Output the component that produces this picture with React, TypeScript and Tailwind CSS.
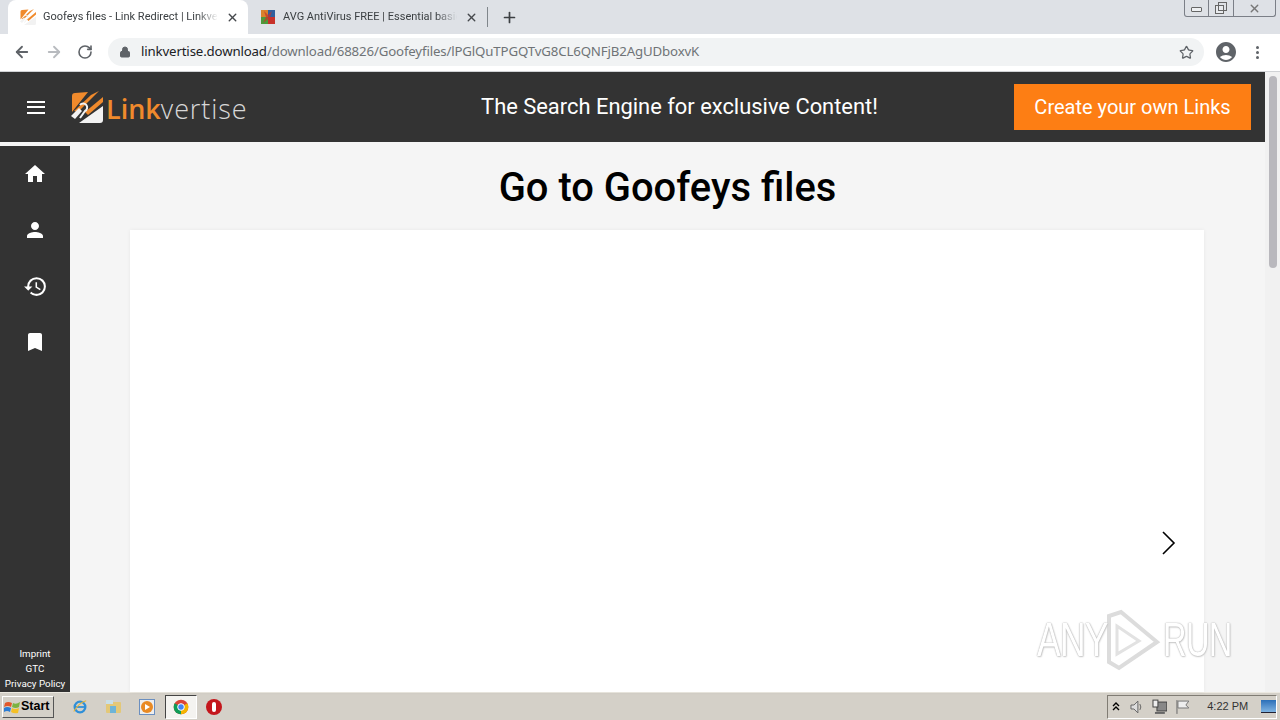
import React from "react";
import { ArrowLeft, ArrowRight, RotateCw, Lock, Star, X, Plus } from "lucide-react";
import { MdHome, MdPerson, MdHistory, MdBookmark, MdAccountCircle } from "react-icons/md";

const LvLogo = ({ size = 32 }: { size?: number }) => (
  <svg width={size} height={size} viewBox="0 0 32 32">
    <path d="M1 5 a3 3 0 0 1 3 -3 L17 1 L1 21 Z" fill="#f08a2c" />
    <path d="M20 4 L28 0 L7 21 L3 20 Z" fill="#f08a2c" />
    <path d="M0 25 L8 17 L11 20 L4 28 Z" fill="#f2f2f2" />
    <path d="M32 6 V11 L17 24 L14 21 Z" fill="#f08a2c" />
    <path d="M32 15 V29 a3 3 0 0 1 -3 3 H8 Z" fill="#f2f2f2" />
    <path d="M9 14 a4 4 0 1 1 5 6 l-5 7" stroke="#f2f2f2" strokeWidth="2" fill="none" />
  </svg>
);

const AvgIcon = () => (
  <svg width="14" height="14" viewBox="0 0 14 14">
    <rect x="0" y="0" width="7" height="7" fill="#d9822b" />
    <rect x="7" y="0" width="7" height="7" fill="#2f5f9e" />
    <rect x="0" y="7" width="7" height="7" fill="#4d9a3a" />
    <rect x="7" y="7" width="7" height="7" fill="#c8322a" />
    <path d="M3 1 L7 5 L11 1 L9 7 L12 13 L7 9 L2 13 L5 7 Z" fill="#c8322a" opacity="0.7" />
  </svg>
);

const Tab = ({ active, icon, title, width }: { active?: boolean; icon: React.ReactNode; title: string; width: string }) => (
  <div className={`${width} h-[34px] flex items-center pl-[12px] pr-[9px] rounded-t-[8px] ${active ? "bg-white" : ""}`}>
    <span className="w-[16px] h-[16px] flex items-center justify-center shrink-0">{icon}</span>
    <span className="ml-[7px] mt-[1px] flex-1 min-w-0 overflow-hidden whitespace-nowrap text-[11px] text-[#3c4043] [mask-image:linear-gradient(to_right,black_88%,transparent)]">
      {title}
    </span>
    <X size={13} strokeWidth={2.6} className="ml-[8px] shrink-0 text-[#45484c]" />
  </div>
);

const Side = ({ children }: { children: React.ReactNode }) => (
  <div className="h-[56px] flex items-center justify-center text-white">{children}</div>
);

const Watermark = () => (
  <div className="absolute left-[1037px] top-[608px] flex items-center pointer-events-none select-none text-white [text-shadow:0_0_2px_#b4b4b4,0_0_1px_#b4b4b4,1px_1px_2px_#d0d0d0]">
    <span className="text-[48px] leading-[60px] font-['Liberation_Sans',sans-serif] [transform:scaleX(0.74)] origin-left w-[68px] tracking-[-1px]">ANY</span>
    <svg width="58" height="64" viewBox="0 0 58 64" className="ml-[-2px]">
      <path d="M6 8 L6 54 L16 60 L54 34 L18 4 Z" fill="none" stroke="#dcdcdc" strokeWidth="4" />
      <path d="M14 18 L14 46 L36 33 Z" fill="none" stroke="#e2e2e2" strokeWidth="3" />
    </svg>
    <span className="text-[48px] leading-[60px] font-['Liberation_Sans',sans-serif] [transform:scaleX(0.68)] origin-left w-[72px] tracking-[-1px] ml-[2px]">RUN</span>
  </div>
);

export default function App() {
  return (
    <div className="relative w-[1280px] h-[720px] overflow-hidden flex flex-col bg-white font-['Roboto',sans-serif]">
      {/* tab strip */}
      <div className="relative h-[34px] shrink-0 bg-[#dee1e6] flex pl-[8px] font-['Roboto',sans-serif]">
        <Tab active width="w-[240px]" icon={<LvLogo size={16} />} title="Goofeys files - Link Redirect | Linkvertise" />
        <Tab width="w-[239px]" icon={<AvgIcon />} title="AVG AntiVirus FREE | Essential basic protection" />
        <div className="w-px h-[20px] mt-[7px] bg-[#80868b]" />
        <div className="w-[42px] flex items-center justify-center">
          <Plus size={17} strokeWidth={2.4} className="text-[#3c4043]" />
        </div>
        <div className="absolute right-[4px] top-0 w-[92px] h-[17px] flex border border-t-0 border-[#7b7f87] rounded-b-[3px] text-[#555]">
          <div className="w-[24px] flex items-center justify-center border-r border-[#7b7f87]">
            <div className="w-[11px] h-[5px] mt-[3px] border border-[#666] rounded-[1px] bg-[#eef0f2]" />
          </div>
          <div className="w-[25px] flex items-center justify-center border-r border-[#7b7f87]">
            <div className="relative w-[9px] h-[9px] mt-[3px] mr-[3px] border border-[#666] bg-[#e8eaed]">
              <div className="absolute left-[2px] top-[-4px] w-[9px] h-[9px] border border-[#666] -z-0" />
            </div>
          </div>
          <div className="flex-1 flex items-center justify-center">
            <X size={13} strokeWidth={2.5} className="text-[#777]" />
          </div>
        </div>
      </div>

      {/* toolbar */}
      <div className="h-[38px] shrink-0 bg-white border-b border-[#d0d2d5] flex items-center pb-[1px]">
        <div className="w-[108px] flex items-center pl-[13px] gap-[14px] text-[#5f6368]">
          <ArrowLeft size={18} strokeWidth={2.4} />
          <ArrowRight size={18} strokeWidth={2.4} className="text-[#b8bbbf]" />
          <RotateCw size={16} strokeWidth={2.4} />
        </div>
        <div className="w-[1096px] h-[28px] rounded-full bg-[#f1f3f4] flex items-center pl-[11px] pr-[10px]">
          <Lock size={12} fill="#5f6368" className="text-[#5f6368]" />
          <span className="ml-[10px] flex-1 text-[13.25px] tracking-[-0.15px] whitespace-nowrap font-['Noto_Sans',sans-serif] text-[#6f7377]">
            <span className="text-[#202124]">linkvertise.download</span>/download/68826/Goofeyfiles/lPGlQuTPGQTvG8CL6QNFjB2AgUDboxvK
          </span>
          <Star size={15} strokeWidth={2} className="text-[#5f6368]" />
        </div>
        <div className="flex-1 flex items-center pl-[10px]">
          <MdAccountCircle size={24} className="text-[#5f6368]" />
          <div className="ml-[18px] flex flex-col gap-[2px]">
            <span className="w-[3px] h-[3px] rounded-full bg-[#5f6368]" />
            <span className="w-[3px] h-[3px] rounded-full bg-[#5f6368]" />
            <span className="w-[3px] h-[3px] rounded-full bg-[#5f6368]" />
          </div>
        </div>
      </div>

      {/* viewport */}
      <div className="flex-1 min-h-0 flex">
        <div className="w-[1265px] flex flex-col min-h-0">
          <header className="h-[70px] shrink-0 bg-[#333333] flex items-center text-white">
            <div className="w-[71px] pl-[27px] flex flex-col gap-[3.5px]">
              <span className="w-[18px] h-[2px] bg-white" />
              <span className="w-[18px] h-[2px] bg-white" />
              <span className="w-[18px] h-[2px] bg-white" />
            </div>
            <LvLogo />
            <span className="ml-[3px] text-[27px] font-['Open_Sans',sans-serif] leading-none w-[144px] whitespace-nowrap mt-[3px]">
              <span className="font-semibold text-[#f08a2c]">Link</span>
              <span className="font-light text-[#d8d8d8] tracking-[0.9px]">vertise</span>
            </span>
            <div className="w-[767px] pl-[96px] ml-[-2px] mt-[1px] text-center text-[21.9px]">The Search Engine for exclusive Content!</div>
            <div className="w-[237px] h-[46px] ml-[-1px] bg-[#fd7e14] flex items-center justify-center text-[20px]">Create your own Links</div>
          </header>
          <div className="h-[4px] shrink-0 bg-[#f5f5f5]" />
          <div className="flex-1 min-h-0 flex bg-[#f5f5f5]">
            <aside className="w-[70px] shrink-0 bg-[#333333] flex flex-col text-white">
              <div className="flex flex-col">
                <Side><MdHome size={24} /></Side>
                <Side><MdPerson size={24} /></Side>
                <Side><MdHistory size={25} /></Side>
                <Side><MdBookmark size={24} /></Side>
              </div>
              <div className="mt-auto pb-[1px] flex flex-col items-center text-[9.8px] leading-[15px]">
                <span>Imprint</span>
                <span>GTC</span>
                <span className="whitespace-nowrap">Privacy Policy</span>
              </div>
            </aside>
            <main className="flex-1 min-w-0 flex flex-col items-center">
              <h1 className="h-[84px] shrink-0 flex items-center text-[39.9px] font-medium text-black">Go to Goofeys files</h1>
              <div className="relative w-[1074px] ml-[-1px] flex-1 bg-white shadow-[0_0_4px_rgba(0,0,0,0.06)]">
                <svg width="16" height="26" viewBox="0 0 16 26" className="absolute left-[1031px] top-[300px]">
                  <path d="M2 2 L13 13 L2 24" fill="none" stroke="#000" strokeWidth="1.6" />
                </svg>
              </div>
            </main>
          </div>
        </div>
        <div className="w-[15px] shrink-0 bg-[#f1f1f1] flex justify-center pt-[4px]">
          <div className="w-[8px] h-[192px] rounded-full bg-[#b9b8bd]" />
        </div>
      </div>

      {/* taskbar */}
      <div className="h-[28px] shrink-0 bg-[#d4d0c8] border-t border-[#ece9e1] flex items-center font-['Liberation_Sans',sans-serif]">
        <div className="ml-[2px] w-[52px] h-[22px] bg-[#d4d0c8] border border-t-white border-l-white border-r-[#555] border-b-[#555] flex items-center pl-[1px]">
          <svg width="17" height="16" viewBox="0 0 17 16">
            <path d="M1 4 Q4 2 8 4 L7 8 Q4 6 0 8 Z" fill="#e2582a" />
            <path d="M9 4 Q12 6 16 3 L15 8 Q12 10 8 8 Z" fill="#7cb342" />
            <path d="M0 9 Q3 7 7 9 L6 13 Q3 11 0 13 Z" fill="#2b7cd3" />
            <path d="M8 9 Q11 11 15 9 L14 14 Q10 15 7 13 Z" fill="#f5c026" />
          </svg>
          <span className="text-[12.5px] font-bold text-black leading-none">Start</span>
        </div>
        <div className="ml-[18px] w-[16px] h-[16px] flex items-center justify-center">
          <svg width="18" height="18" viewBox="0 0 18 18">
            <circle cx="9" cy="9" r="6" fill="none" stroke="#2f8fd8" strokeWidth="2.6" />
            <path d="M3 9 H15" stroke="#2f8fd8" strokeWidth="2" />
            <path d="M2 14 Q8 4 16 2" stroke="#e5b53c" strokeWidth="1.3" fill="none" />
          </svg>
        </div>
        <div className="ml-[17px] w-[17px] h-[16px] flex items-center justify-center">
          <svg width="17" height="15" viewBox="0 0 17 15">
            <rect x="1" y="3" width="15" height="11" rx="1" fill="#e3c878" />
            <rect x="1" y="1" width="7" height="4" fill="#c9dfe8" />
            <rect x="5" y="7" width="6" height="7" fill="#6db4d8" />
          </svg>
        </div>
        <div className="ml-[17px] w-[16px] h-[16px] border border-[#6b8fc0] bg-[#eee] flex items-center justify-center">
          <div className="w-[12px] h-[12px] rounded-full bg-[#e98a24] flex items-center justify-center">
            <div className="w-0 h-0 border-y-[3px] border-y-transparent border-l-[5px] border-l-white ml-[1px]" />
          </div>
        </div>
        <div className="ml-[10px] w-[32px] h-[24px] bg-[#f4f3f0] border border-t-[#444] border-l-[#444] border-r-white border-b-white flex items-center justify-center">
          <svg width="16" height="16" viewBox="0 0 48 48">
            <circle cx="24" cy="24" r="22" fill="#db4437" />
            <path d="M24 24 L43 13 A22 22 0 0 1 24 46 Z" fill="#f4b400" />
            <path d="M24 24 L24 46 A22 22 0 0 1 5 13 Z" fill="#0f9d58" />
            <circle cx="24" cy="24" r="10" fill="#4285f4" stroke="#fff" strokeWidth="3" />
          </svg>
        </div>
        <div className="ml-[9px] w-[16px] h-[16px] rounded-full bg-[#c4161c] flex items-center justify-center">
          <div className="w-[4px] h-[10px] rounded-full bg-white" />
        </div>
        <div className="ml-auto mr-[3px] w-[170px] h-[24px] border border-t-[#807c74] border-l-[#807c74] border-r-white border-b-white flex items-center text-[#333]">
          <span className="ml-[2px] w-[12px] flex flex-col items-center">
            <svg width="8" height="9" viewBox="0 0 8 9">
              <path d="M1 4 L4 1 L7 4 M1 8 L4 5 L7 8" fill="none" stroke="#000" strokeWidth="1.4" />
            </svg>
          </span>
          <svg width="16" height="16" viewBox="0 0 16 16" className="ml-[7px]">
            <path d="M2 6 H5 L9 2 V14 L5 10 H2 Z" fill="#ddd" stroke="#666" />
            <path d="M11 5 Q13 8 11 11" fill="none" stroke="#666" />
          </svg>
          <svg width="16" height="16" viewBox="0 0 16 16" className="ml-[7px]">
            <rect x="5" y="3" width="10" height="9" fill="#888" stroke="#444" />
            <rect x="1" y="1" width="5" height="7" fill="#eee" stroke="#444" />
            <rect x="3" y="13" width="10" height="2" fill="#666" />
          </svg>
          <svg width="16" height="16" viewBox="0 0 16 16" className="ml-[8px]">
            <path d="M2 1 V15" stroke="#666" />
            <path d="M3 2 H14 L11 6 L14 9 H3 Z" fill="#eee" stroke="#777" />
          </svg>
          <span className="ml-[16px] text-[11px] whitespace-nowrap">4:22 PM</span>
          <div className="ml-[13px] w-[15px] h-[13px] bg-gradient-to-b from-[#2a6fb8] to-[#7fb4e2] border-b border-[#223]" />
        </div>
      </div>

      <Watermark />
    </div>
  );
}
